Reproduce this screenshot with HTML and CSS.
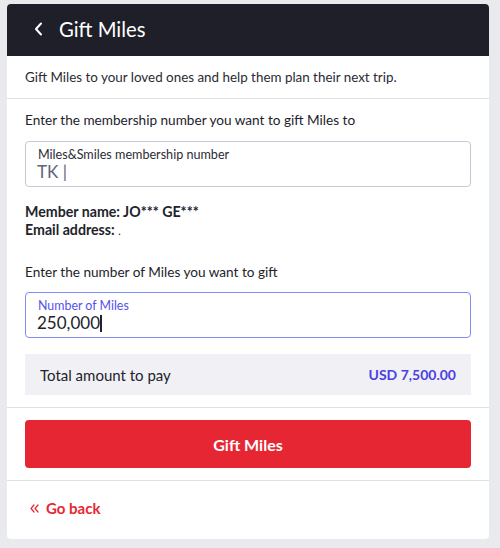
FILE: index.html
```html
<!DOCTYPE html>
<html lang="en">
<head>
<meta charset="utf-8">
<link rel="stylesheet" href="styles.css">
</head>
<body>
<div class="card">
  <div class="header">
    <svg class="back" width="10" height="14" viewBox="0 0 10 14"><path d="M7 1.5 L2 7 L7 12.5" fill="none" stroke="#fff" stroke-width="2" stroke-linecap="round" stroke-linejoin="round"/></svg>
    <h1 class="title">Gift Miles</h1>
  </div>
  <div class="section desc">Gift Miles to your loved ones and help them plan their next trip.</div>
  <div class="section form">
    <p class="prompt">Enter the membership number you want to gift Miles to</p>
    <div class="field">
      <div class="field-label">Miles&amp;Smiles membership number</div>
      <div class="field-value muted">TK |</div>
    </div>
    <p class="info first">Member name: JO*** GE***</p>
    <p class="info">Email address: <span class="dot">.</span></p>
    <p class="prompt second">Enter the number of Miles you want to gift</p>
    <div class="field active">
      <div class="field-label">Number of Miles</div>
      <div class="field-value">250,000<span class="caret"></span></div>
    </div>
    <div class="total">
      <span>Total amount to pay</span>
      <span class="amount">USD 7,500.00</span>
    </div>
  </div>
  <div class="section actions">
    <button class="primary">Gift Miles</button>
  </div>
  <div class="footer">
    <a class="goback" href="#"><svg width="9" height="9" viewBox="0 0 9 9"><path d="M4 1 L1 4.5 L4 8 M8 1 L5 4.5 L8 8" fill="none" stroke="#e62733" stroke-width="1.2" stroke-linecap="round" stroke-linejoin="round"/></svg><span>Go back</span></a>
  </div>
</div>
</body>
</html>
```
FILE: styles.css
```css
* { box-sizing: border-box; }
html, body { margin: 0; padding: 0; }
body {
  background: #e9eaee;
  font-family: "Lato", "Liberation Sans", sans-serif;
  color: #22232b;
  padding: 4px 11px 0 7px;
  height: 548px;
}
.card {
  background: #fff;
  border-radius: 4px;
  width: 482px;
  overflow: hidden;
}
.header {
  background: #1e1f29;
  height: 52px;
  display: flex;
  align-items: center;
  padding-left: 27px;
  padding-bottom: 2px;
}
.back { margin-right: 15px; }
.title {
  margin: 0;
  color: #fff;
  font-size: 20.3px;
  font-weight: 400;
}
.section { border-bottom: 1px solid #dfe0e5; }
.desc {
  height: 43px;
  padding: 0 18px;
  display: flex;
  align-items: center;
  font-size: 13.4px;
  color: #2a2b33;
}
.form { padding: 12px 18px 12px; }
.prompt {
  margin: 0;
  font-size: 13.6px;
  line-height: 18px;
}
.prompt.second { margin-top: 23px; }
.field {
  margin-top: 12px;
  height: 46px;
  border: 1px solid #c6c9d5;
  border-radius: 4px;
  padding: 5px 11px 0;
}
.field.active { border-color: #7e8cf4; margin-top: 11px; }
.field-label {
  font-size: 12.6px;
  line-height: 15px;
  color: #2c2d35;
  padding-left: 1px;
}
.active .field-label { color: #5552e8; font-size: 12.4px; }
.field-value {
  font-size: 17px;
  line-height: 19px;
  color: #22232b;
}
.field-value.muted { color: #5d6579; }
.caret {
  display: inline-block;
  width: 1.5px;
  height: 17px;
  background: #22232b;
  vertical-align: -3px;
}
.info {
  margin: 0;
  font-size: 14.2px;
  line-height: 18px;
  font-weight: 700;
}
.info.first { margin-top: 16px; }
.dot { font-size: 10px; }
.total {
  margin-top: 16px;
  height: 41px;
  background: #f0f0f5;
  display: flex;
  align-items: center;
  justify-content: space-between;
  padding: 0 15px;
  font-size: 15px;
}
.amount { color: #4b3fe2; font-weight: 700; font-size: 14px; }
.actions { padding: 12px 18px; }
.primary {
  display: block;
  width: 100%;
  height: 48px;
  background: #e62733;
  border: none;
  border-radius: 4px;
  color: #fff;
  font-family: inherit;
  font-size: 16px;
  font-weight: 700;
}
.footer {
  height: 58px;
  display: flex;
  align-items: center;
  padding: 0 23px 4px;
}
.goback {
  display: flex;
  align-items: center;
  gap: 7px;
  color: #e62733;
  font-size: 15px;
  font-weight: 700;
  text-decoration: none;
}
```
